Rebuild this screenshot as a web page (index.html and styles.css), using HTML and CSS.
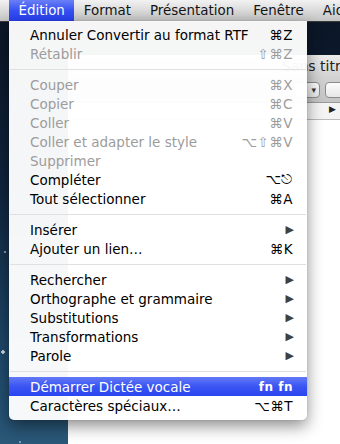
FILE: index.html
```html
<!DOCTYPE html>
<html lang="fr">
<head>
  <meta charset="UTF-8" />
  <title>Menu Édition</title>
  <link rel="stylesheet" href="styles.css">
</head>
<body>

  <!-- Menu bar -->
  <div class="menubar">
    <span class="menu-title active">Édition</span>
    <span class="menu-title">Format</span>
    <span class="menu-title">Présentation</span>
    <span class="menu-title">Fenêtre</span>
    <span class="menu-title">Aide</span>
  </div>

  <div class="desktop">

    <!-- Document window behind the menu -->
    <div class="window">
      <div class="win-title">Sans titre</div>
      <div class="win-toolbar">
        <span class="popup"><span class="popup-arrow">▾</span></span>
        <span class="popup small"></span>
      </div>
      <div class="win-ruler">
        <span class="ruler-mark">▶</span>
      </div>
      <div class="win-page"></div>
    </div>

    <!-- Edit menu -->
    <div class="menu">
      <div class="item"><span>Annuler Convertir au format RTF</span><span class="key">⌘Z</span></div>
      <div class="item disabled"><span>Rétablir</span><span class="key">⇧⌘Z</span></div>
      <div class="sep"></div>
      <div class="item disabled"><span>Couper</span><span class="key">⌘X</span></div>
      <div class="item disabled"><span>Copier</span><span class="key">⌘C</span></div>
      <div class="item disabled"><span>Coller</span><span class="key">⌘V</span></div>
      <div class="item disabled"><span>Coller et adapter le style</span><span class="key">⌥⇧⌘V</span></div>
      <div class="item disabled"><span>Supprimer</span><span class="key"></span></div>
      <div class="item"><span>Compléter</span><span class="key">⌥⎋</span></div>
      <div class="item"><span>Tout sélectionner</span><span class="key">⌘A</span></div>
      <div class="sep"></div>
      <div class="item"><span>Insérer</span><span class="arrow">▶</span></div>
      <div class="item"><span>Ajouter un lien…</span><span class="key">⌘K</span></div>
      <div class="sep"></div>
      <div class="item"><span>Rechercher</span><span class="arrow">▶</span></div>
      <div class="item"><span>Orthographe et grammaire</span><span class="arrow">▶</span></div>
      <div class="item"><span>Substitutions</span><span class="arrow">▶</span></div>
      <div class="item"><span>Transformations</span><span class="arrow">▶</span></div>
      <div class="item"><span>Parole</span><span class="arrow">▶</span></div>
      <div class="sep"></div>
      <div class="item selected"><span>Démarrer Dictée vocale</span><span class="key fn">fn fn</span></div>
      <div class="item"><span>Caractères spéciaux…</span><span class="key">⌥⌘T</span></div>
    </div>

  </div>

</body>
</html>
```

FILE: styles.css
```css
* {
  margin: 0; padding: 0; box-sizing: border-box;
}
body {
  width: 340px;
  height: 444px;
  overflow: hidden;
  font-family: "DejaVu Sans", "Noto Sans", sans-serif;
  font-size: 13.5px;
  color: #000;
  background: #0c1a2c;
}

/* Menu bar */
.menubar {
  height: 22px;
  display: flex;
  align-items: stretch;
  padding-left: 9px;
  background: linear-gradient(#f2f2f2, #d6d6d6 60%, #c4c4c4);
  border-bottom: 1px solid #3a3a3a;
  white-space: nowrap;
  overflow: hidden;
}
.menu-title {
  padding: 0 9.5px;
  line-height: 21px;
  font-size: 13.4px;
  color: #141414;
}
.menu-title.active {
  color: #fff;
  background: linear-gradient(#6a80f7, #3650f2 50%, #2840ef);
}

/* Desktop + window behind */
.desktop {
  position: relative;
  height: 422px;
  background:
    radial-gradient(circle at 3px 330px, rgba(255,255,255,0.8) 0 1.5px, transparent 2px),
    radial-gradient(circle at 5px 230px, rgba(255,255,255,0.5) 0 1px, transparent 1.5px),
    radial-gradient(circle at 20px 420px, rgba(255,255,255,0.4) 0 1px, transparent 1.5px),
    linear-gradient(#0b1626, #10253e 40%, #1f4a6c 80%, #2a5878);
}
.window {
  position: absolute;
  left: 68px;
  top: 33px;
  width: 272px;
  bottom: 0;
  overflow: hidden;
  background: #fff;
}
.win-title {
  height: 22px;
  padding-left: 214px;
  line-height: 22px;
  font-size: 14px;
  color: #222;
  background: linear-gradient(#ececec, #d2d2d2);
  white-space: nowrap;
}
.win-toolbar {
  height: 26px;
  display: flex;
  align-items: center;
  gap: 5px;
  padding-left: 226px;
  background: linear-gradient(#d2d2d2, #c4c4c4);
  border-bottom: 1px solid #9a9a9a;
}
.popup {
  width: 26px;
  height: 16px;
  flex-shrink: 0;
  border: 1px solid #8c8c8c;
  border-radius: 4px;
  background: linear-gradient(#fdfdfd, #e6e6e6);
  display: flex;
  justify-content: flex-end;
  align-items: center;
  padding-right: 3px;
  font-size: 9px;
  color: #333;
}
.popup.small {
  width: 20px;
}
.win-ruler {
  height: 17px;
  position: relative;
  background: #f4f4f4;
  border-bottom: 1px solid #bbb;
}
.ruler-mark {
  position: absolute;
  left: 261px;
  top: 1px;
  font-size: 9px;
  color: #222;
}

/* Edit menu */
.menu {
  position: absolute;
  left: 9px;
  top: -1px;
  width: 298px;
  padding: 4px 0 5px;
  background: rgba(255,255,255,0.96);
  border-radius: 0 0 5px 5px;
  box-shadow: 0 6px 16px rgba(0,0,0,0.45), 0 0 1px rgba(0,0,0,0.4);
}
.item {
  height: 19px;
  display: flex;
  justify-content: space-between;
  align-items: center;
  padding: 0 14px 0 21px;
  white-space: nowrap;
}
.item.disabled {
  color: #9c9c9c;
}
.item.selected {
  color: #fff;
  background: linear-gradient(#6479f6, #3a55f3 50%, #2b45f0);
}
.key {
  letter-spacing: 0.5px;
}
.key.fn {
  font-size: 12px;
  font-weight: bold;
}
.arrow {
  font-size: 11px;
  color: #404040;
  margin-right: -1px;
}
.sep {
  height: 1px;
  margin: 6px 1px 5px;
  background: #e0e0e0;
}
```
